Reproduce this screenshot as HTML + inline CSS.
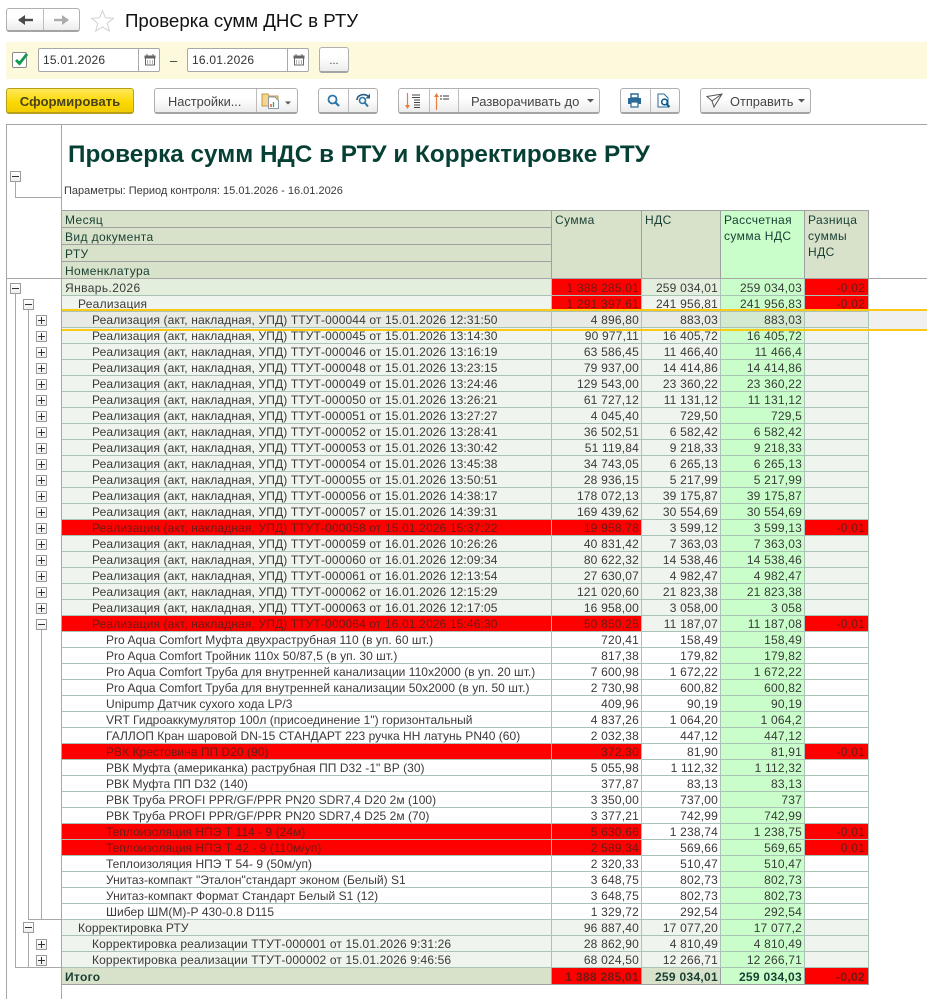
<!DOCTYPE html>
<html lang="ru"><head><meta charset="utf-8"><title>Проверка сумм ДНС в РТУ</title>
<style>
html,body{margin:0;padding:0;background:#fff;width:927px;height:999px;overflow:hidden}
body{font-family:"Liberation Sans",sans-serif;font-size:12px;color:#333;position:relative}
.a{position:absolute;box-sizing:border-box;white-space:nowrap}
.btn{position:absolute;box-sizing:border-box;border:1px solid #b0b0b0;border-bottom:2px solid #a4a4a4;border-radius:3px;background:linear-gradient(#fff,#fff 40%,#ececec);color:#444;line-height:22px;text-align:center;white-space:nowrap;font-size:12.8px}
.div{position:absolute;width:1px;background:#bcbcbc}
.inp{position:absolute;box-sizing:border-box;border:1px solid #a8a8a8;border-radius:2px;background:#fff;height:24px;width:122px;line-height:22px;padding-left:4px;color:#333;letter-spacing:.22px}
.inp i{position:absolute;left:99px;top:0;width:1px;height:22px;background:#a8a8a8}
.inp svg{position:absolute;left:105px;top:5px}
.h{position:absolute;box-sizing:border-box;background:#d8e2ca;border:1px solid #a0a0a0;border-left:0;color:#173f33;line-height:16px;padding:1px 3px;letter-spacing:.4px}
.hl{position:absolute;left:62px;width:490px;height:17px;box-sizing:border-box;background:#d8e2ca;border-bottom:1px solid #a0a0a0;color:#173f33;line-height:18px;padding-left:3px;letter-spacing:.38px}
.hz{position:absolute;background:#a8a8a8;height:1px}
.vt{position:absolute;background:#a8a8a8;width:1px}
.gl{position:absolute;background:#a6a6a6}
.bx{position:absolute;box-sizing:border-box;width:11px;height:11px;border:1px solid #9a9a9a;background:linear-gradient(#fff,#eee)}
.bx:before{content:"";position:absolute;left:1px;top:4px;width:7px;height:1px;background:#333}
.p:after{content:"";position:absolute;left:4px;top:1px;width:1px;height:7px;background:#333}
table{position:absolute;left:62px;top:279px;border-collapse:separate;border-spacing:0;table-layout:fixed;width:807px}
td{box-sizing:border-box;height:16px;padding:2px 2px 0 0;border-right:1px solid #a9c4b7;border-bottom:1px solid #a9c4b7;line-height:13px;text-align:right;white-space:nowrap;overflow:hidden;color:#3a3a3a;background:#f0f4ee;letter-spacing:.2px}
td:first-child{text-align:left;background:inherit;letter-spacing:.13px}
td:nth-child(4){background:#c9fdc9}
td:nth-child(5){padding-right:3px}
tr{background:#f0f4ee}
tr.w td{background:#fff}
tr.w td:nth-child(4){background:#c9fdc9}
tr td:first-child{padding-left:30px}
tr.w td:first-child{padding-left:44px;letter-spacing:.03px}
tr.l0 td:first-child{padding-left:3px;letter-spacing:.4px}
tr.l1 td:first-child{padding-left:16px;letter-spacing:.25px}
tr.l0 td{background:#e3eedd;height:17px;line-height:14px}
tr.l0 td:nth-child(4){background:#c9fdc9}
tr.r td:first-child,td.x,tr.w td.x,tr.l0 td.x,tr.t td.x{background:#f00;color:#6d1a14}
tr.s td{background:#e8eae5}
tr.s td:nth-child(4){background:#d3e9d0}
tr.t td{background:#d8e2ca;height:17px;line-height:14px;font-weight:bold;color:#173f33;border-bottom:1px solid #a0a0a0;border-right-color:#a0a0a0;letter-spacing:.3px}
tr.t td:nth-child(4){background:#c9fdc9}
tr.t td:first-child{padding-left:3px}
</style></head><body>

<!-- Nav -->
<div class="btn" style="left:6px;top:8px;width:74px;height:24px"></div>
<div class="div" style="left:43px;top:9px;height:21px"></div>
<svg class="a" style="left:17px;top:13px" width="60" height="14"><path d="M2 7H16" stroke="#4a4a4a" stroke-width="2.4"/><path d="M1 7L8 2V12Z" fill="#4a4a4a"/><path d="M37 7H51" stroke="#acacac" stroke-width="2.4"/><path d="M52 7L45 2V12Z" fill="#acacac"/></svg>
<svg class="a" style="left:91px;top:9px" width="24" height="24"><path d="M11.5 1.5L14.4 8.8 22.5 9.3 16.2 14.4 18.3 22 11.5 17.9 4.7 22 6.8 14.4 .5 9.3 8.6 8.8Z" fill="#fff" stroke="#d0d0d0" stroke-width="1"/></svg>
<div class="a" style="left:125px;top:10px;font-size:18.7px;line-height:22px;color:#111">Проверка сумм ДНС в РТУ</div>

<!-- Filter band -->
<div class="a" style="left:6px;top:42px;width:921px;height:37px;background:#fdf9dc"></div>
<div class="a" style="left:12px;top:52px;width:15px;height:16px;border:1px solid #8a8a8a;border-radius:2px;background:#fff"></div>
<svg class="a" style="left:13px;top:51px" width="16" height="16"><path d="M3 9L6.500 12.500 14 3" fill="none" stroke="#0e9a50" stroke-width="2.8"/></svg>
<div class="inp" style="left:38px;top:48px">15.01.2026<i></i><svg width="12" height="12"><path d="M1.5 2H10.5V11H1.5Z" fill="#fff" stroke="#666"/><path d="M1 2H11V4H1ZM3 0V2M9 0V2" fill="#666" stroke="#666"/><path d="M3 7H4M5.5 7H6.5M8 7H9M3 9H4M5.5 9H6.5M8 9H9" stroke="#666"/></svg></div>
<div class="a" style="left:170px;top:53px;line-height:15px;color:#333;font-size:13px">–</div>
<div class="inp" style="left:187px;top:48px">16.01.2026<i></i><svg width="12" height="12"><path d="M1.5 2H10.5V11H1.5Z" fill="#fff" stroke="#666"/><path d="M1 2H11V4H1ZM3 0V2M9 0V2" fill="#666" stroke="#666"/><path d="M3 7H4M5.5 7H6.5M8 7H9M3 9H4M5.5 9H6.5M8 9H9" stroke="#666"/></svg></div>
<div class="btn" style="left:319px;top:47px;width:30px;height:26px;line-height:26px;font-size:11px">...</div>

<!-- Toolbar -->
<div class="btn" style="left:6px;top:88px;width:128px;height:26px;line-height:25px;background:linear-gradient(#ffe95a,#fbd800 60%,#f2cc00);border-color:#b79f1a;font-weight:bold;font-size:13.2px;color:#4a431a">Сформировать</div>
<div class="btn" style="left:154px;top:88px;width:144px;height:26px;line-height:25px;text-align:left;padding-left:13px">Настройки...</div>
<div class="div" style="left:256px;top:89px;height:23px"></div>
<svg class="a" style="left:261px;top:92px" width="32" height="18"><path d="M1 2H7L8 4H17V14H1Z" fill="#f5d48c" stroke="#c09a50"/><path d="M7.500 5H14L17.500 8.500V16.500H7.500Z" fill="#fff" stroke="#8a9aa6"/><path d="M10 15V12" stroke="#d04030" stroke-width="1.300"/><path d="M12.500 15V10" stroke="#40a060" stroke-width="1.300"/><path d="M24 9.500H30L27 12.500Z" fill="#555"/></svg>

<div class="btn" style="left:318px;top:88px;width:60px;height:26px"></div>
<div class="div" style="left:348px;top:89px;height:23px"></div>
<svg class="a" style="left:326px;top:93px" width="46" height="16"><circle cx="6.500" cy="6.500" r="4" fill="none" stroke="#2a76a8" stroke-width="1.800"/><path d="M9.500 9.500L13 13" stroke="#2a76a8" stroke-width="2.200"/><circle cx="36.500" cy="7.500" r="3" fill="none" stroke="#2a76a8" stroke-width="1.600"/><path d="M39 10L42 13.500" stroke="#2a76a8" stroke-width="2"/><path d="M31 7C31 2 38 0 42 3" fill="none" stroke="#2a5f88" stroke-width="1.600"/><path d="M44 0.500V5.500H39.500Z" fill="#2a5f88"/></svg>

<div class="btn" style="left:398px;top:88px;width:202px;height:26px;line-height:25px;text-align:left;padding-left:72px;font-size:13px">Разворачивать до</div>
<div class="div" style="left:429px;top:89px;height:23px"></div>
<div class="div" style="left:458px;top:89px;height:23px"></div>
<svg class="a" style="left:404px;top:92px" width="50" height="18"><path d="M3.500 1V15" stroke="#ee7a3c" stroke-width="1.200"/><path d="M1 13H6L3.500 17Z" fill="#ee7a3c"/><path d="M8 3H16M8 5.500H16M10 8H16M10 10.500H16M10 13H16M10 15.500H16" stroke="#444" stroke-width=".9"/><path d="M32.500 3V18" stroke="#ee7a3c" stroke-width="1.200"/><path d="M30 5H35L32.500 1Z" fill="#ee7a3c"/><path d="M36 4H38M39 4H45M36 7H38M39 7H45" stroke="#333"/></svg>
<svg class="a" style="left:587px;top:99px" width="8" height="5"><path d="M0 0H7L3.500 3.500Z" fill="#555"/></svg>

<div class="btn" style="left:620px;top:88px;width:60px;height:26px"></div>
<div class="div" style="left:650px;top:89px;height:23px"></div>
<svg class="a" style="left:627px;top:93px" width="48" height="16"><path d="M4 1H11V5H4Z" fill="none" stroke="#2b6a96" stroke-width="1.400"/><path d="M1 5H14V11H1Z" fill="#2b6a96"/><path d="M4 9H11V14H4Z" fill="#fff" stroke="#2b6a96" stroke-width="1.200"/><path d="M31 1H37L41 5V14H31Z" fill="#fff" stroke="#2b6a96"/><circle cx="37.500" cy="9" r="2.800" fill="#fff" stroke="#0f5a8a" stroke-width="1.600"/><path d="M39.500 11L42.500 14" stroke="#0f5a8a" stroke-width="2"/></svg>

<div class="btn" style="left:700px;top:88px;width:111px;height:26px;line-height:25px;text-align:left;padding-left:29px">Отправить</div>
<svg class="a" style="left:706px;top:93px" width="18" height="16"><path d="M1 3.500L16 1 8 14 6 8ZM6 8L16 1" fill="none" stroke="#555" stroke-width="1"/></svg>
<svg class="a" style="left:798px;top:99px" width="8" height="5"><path d="M0 0H7L3.500 3.500Z" fill="#555"/></svg>

<!-- Report frame -->
<div class="gl" style="left:6px;top:124px;width:921px;height:1px"></div>
<div class="gl" style="left:6px;top:124px;width:1px;height:875px"></div>
<div class="gl" style="left:61px;top:124px;width:1px;height:875px"></div>

<div class="a" style="left:68px;top:140px;font-size:24.3px;line-height:30px;font-weight:bold;color:#063f33">Проверка сумм НДС в РТУ и Корректировке РТУ</div>
<div class="a" style="left:64px;top:185px;font-size:11px;line-height:12px;color:#3a3a3a">Параметры: Период контроля: 15.01.2026 - 16.01.2026</div>

<!-- Column header -->
<div class="hz" style="left:62px;top:210px;width:807px;background:#a0a0a0"></div>
<div class="hl" style="top:211px">Месяц</div>
<div class="hl" style="top:228px">Вид документа</div>
<div class="hl" style="top:245px">РТУ</div>
<div class="hl" style="top:262px">Номенклатура</div>
<div class="a" style="left:551px;top:210px;width:1px;height:69px;background:#a0a0a0"></div>
<div class="h" style="left:552px;top:210px;width:90px;height:69px">Сумма</div>
<div class="h" style="left:642px;top:210px;width:79px;height:69px">НДС</div>
<div class="h" style="left:721px;top:210px;width:84px;height:69px;background:#c9fdc9">Рассчетная сумма НДС</div>
<div class="h" style="left:805px;top:210px;width:64px;height:69px">Разница суммы НДС</div>
<div class="gl" style="left:6px;top:278px;width:921px;height:1px"></div>

<!-- Data -->
<table>
<colgroup><col style="width:490px"><col style="width:90px"><col style="width:79px"><col style="width:84px"><col style="width:64px"></colgroup>
<tr class="l0"><td>Январь.2026</td><td class="x">1 388 285,01</td><td>259 034,01</td><td>259 034,03</td><td class="x">-0,02</td></tr>
<tr class="l1"><td>Реализация</td><td class="x">1 291 397,61</td><td>241 956,81</td><td>241 956,83</td><td class="x">-0,02</td></tr>
<tr class="s"><td>Реализация (акт, накладная, УПД) ТТУТ-000044 от 15.01.2026 12:31:50</td><td>4 896,80</td><td>883,03</td><td>883,03</td><td></td></tr>
<tr><td>Реализация (акт, накладная, УПД) ТТУТ-000045 от 15.01.2026 13:14:30</td><td>90 977,11</td><td>16 405,72</td><td>16 405,72</td><td></td></tr>
<tr><td>Реализация (акт, накладная, УПД) ТТУТ-000046 от 15.01.2026 13:16:19</td><td>63 586,45</td><td>11 466,40</td><td>11 466,4</td><td></td></tr>
<tr><td>Реализация (акт, накладная, УПД) ТТУТ-000048 от 15.01.2026 13:23:15</td><td>79 937,00</td><td>14 414,86</td><td>14 414,86</td><td></td></tr>
<tr><td>Реализация (акт, накладная, УПД) ТТУТ-000049 от 15.01.2026 13:24:46</td><td>129 543,00</td><td>23 360,22</td><td>23 360,22</td><td></td></tr>
<tr><td>Реализация (акт, накладная, УПД) ТТУТ-000050 от 15.01.2026 13:26:21</td><td>61 727,12</td><td>11 131,12</td><td>11 131,12</td><td></td></tr>
<tr><td>Реализация (акт, накладная, УПД) ТТУТ-000051 от 15.01.2026 13:27:27</td><td>4 045,40</td><td>729,50</td><td>729,5</td><td></td></tr>
<tr><td>Реализация (акт, накладная, УПД) ТТУТ-000052 от 15.01.2026 13:28:41</td><td>36 502,51</td><td>6 582,42</td><td>6 582,42</td><td></td></tr>
<tr><td>Реализация (акт, накладная, УПД) ТТУТ-000053 от 15.01.2026 13:30:42</td><td>51 119,84</td><td>9 218,33</td><td>9 218,33</td><td></td></tr>
<tr><td>Реализация (акт, накладная, УПД) ТТУТ-000054 от 15.01.2026 13:45:38</td><td>34 743,05</td><td>6 265,13</td><td>6 265,13</td><td></td></tr>
<tr><td>Реализация (акт, накладная, УПД) ТТУТ-000055 от 15.01.2026 13:50:51</td><td>28 936,15</td><td>5 217,99</td><td>5 217,99</td><td></td></tr>
<tr><td>Реализация (акт, накладная, УПД) ТТУТ-000056 от 15.01.2026 14:38:17</td><td>178 072,13</td><td>39 175,87</td><td>39 175,87</td><td></td></tr>
<tr><td>Реализация (акт, накладная, УПД) ТТУТ-000057 от 15.01.2026 14:39:31</td><td>169 439,62</td><td>30 554,69</td><td>30 554,69</td><td></td></tr>
<tr class="r"><td>Реализация (акт, накладная, УПД) ТТУТ-000058 от 15.01.2026 15:37:22</td><td class="x">19 958,78</td><td>3 599,12</td><td>3 599,13</td><td class="x">-0,01</td></tr>
<tr><td>Реализация (акт, накладная, УПД) ТТУТ-000059 от 16.01.2026 10:26:26</td><td>40 831,42</td><td>7 363,03</td><td>7 363,03</td><td></td></tr>
<tr><td>Реализация (акт, накладная, УПД) ТТУТ-000060 от 16.01.2026 12:09:34</td><td>80 622,32</td><td>14 538,46</td><td>14 538,46</td><td></td></tr>
<tr><td>Реализация (акт, накладная, УПД) ТТУТ-000061 от 16.01.2026 12:13:54</td><td>27 630,07</td><td>4 982,47</td><td>4 982,47</td><td></td></tr>
<tr><td>Реализация (акт, накладная, УПД) ТТУТ-000062 от 16.01.2026 12:15:29</td><td>121 020,60</td><td>21 823,38</td><td>21 823,38</td><td></td></tr>
<tr><td>Реализация (акт, накладная, УПД) ТТУТ-000063 от 16.01.2026 12:17:05</td><td>16 958,00</td><td>3 058,00</td><td>3 058</td><td></td></tr>
<tr class="r"><td>Реализация (акт, накладная, УПД) ТТУТ-000064 от 16.01.2026 15:46:30</td><td class="x">50 850,25</td><td>11 187,07</td><td>11 187,08</td><td class="x">-0,01</td></tr>
<tr class="w"><td>Pro Aqua Comfort Муфта двухраструбная 110 (в уп. 60 шт.)</td><td>720,41</td><td>158,49</td><td>158,49</td><td></td></tr>
<tr class="w"><td>Pro Aqua Comfort Тройник 110х 50/87,5 (в уп. 30 шт.)</td><td>817,38</td><td>179,82</td><td>179,82</td><td></td></tr>
<tr class="w"><td>Pro Aqua Comfort Труба для внутренней канализации 110х2000 (в уп. 20 шт.)</td><td>7 600,98</td><td>1 672,22</td><td>1 672,22</td><td></td></tr>
<tr class="w"><td>Pro Aqua Comfort Труба для внутренней канализации 50х2000 (в уп. 50 шт.)</td><td>2 730,98</td><td>600,82</td><td>600,82</td><td></td></tr>
<tr class="w"><td>Unipump Датчик сухого хода LP/3</td><td>409,96</td><td>90,19</td><td>90,19</td><td></td></tr>
<tr class="w"><td>VRT Гидроаккумулятор 100л (присоединение 1") горизонтальный</td><td>4 837,26</td><td>1 064,20</td><td>1 064,2</td><td></td></tr>
<tr class="w"><td>ГАЛЛОП Кран шаровой DN-15 СТАНДАРТ 223 ручка НН латунь PN40 (60)</td><td>2 032,38</td><td>447,12</td><td>447,12</td><td></td></tr>
<tr class="w r"><td>РВК Крестовина ПП D20 (90)</td><td class="x">372,30</td><td>81,90</td><td>81,91</td><td class="x">-0,01</td></tr>
<tr class="w"><td>РВК Муфта (американка) раструбная ПП D32 -1" ВР (30)</td><td>5 055,98</td><td>1 112,32</td><td>1 112,32</td><td></td></tr>
<tr class="w"><td>РВК Муфта ПП D32 (140)</td><td>377,87</td><td>83,13</td><td>83,13</td><td></td></tr>
<tr class="w"><td>РВК Труба PROFI PPR/GF/PPR PN20 SDR7,4 D20 2м (100)</td><td>3 350,00</td><td>737,00</td><td>737</td><td></td></tr>
<tr class="w"><td>РВК Труба PROFI PPR/GF/PPR PN20 SDR7,4 D25 2м (70)</td><td>3 377,21</td><td>742,99</td><td>742,99</td><td></td></tr>
<tr class="w r"><td>Теплоизоляция НПЭ Т 114 - 9 (24м)</td><td class="x">5 630,66</td><td>1 238,74</td><td>1 238,75</td><td class="x">-0,01</td></tr>
<tr class="w r"><td>Теплоизоляция НПЭ Т 42 - 9 (110м/уп)</td><td class="x">2 589,34</td><td>569,66</td><td>569,65</td><td class="x">0,01</td></tr>
<tr class="w"><td>Теплоизоляция НПЭ Т 54- 9 (50м/уп)</td><td>2 320,33</td><td>510,47</td><td>510,47</td><td></td></tr>
<tr class="w"><td>Унитаз-компакт "Эталон"стандарт  эконом (Белый) S1</td><td>3 648,75</td><td>802,73</td><td>802,73</td><td></td></tr>
<tr class="w"><td>Унитаз-компакт Формат Стандарт Белый S1 (12)</td><td>3 648,75</td><td>802,73</td><td>802,73</td><td></td></tr>
<tr class="w"><td>Шибер ШМ(М)-Р 430-0.8 D115</td><td>1 329,72</td><td>292,54</td><td>292,54</td><td></td></tr>
<tr class="l1"><td style="letter-spacing:.1px">Корректировка РТУ</td><td>96 887,40</td><td>17 077,20</td><td>17 077,2</td><td></td></tr>
<tr><td>Корректировка реализации ТТУТ-000001 от 15.01.2026 9:31:26</td><td>28 862,90</td><td>4 810,49</td><td>4 810,49</td><td></td></tr>
<tr><td>Корректировка реализации ТТУТ-000002 от 15.01.2026 9:46:56</td><td>68 024,50</td><td>12 266,71</td><td>12 266,71</td><td></td></tr>
<tr class="t"><td>Итого</td><td class="x">1 388 285,01</td><td>259 034,01</td><td>259 034,03</td><td class="x">-0,02</td></tr>
</table>

<!-- Selected row tail and yellow lines -->
<div class="a" style="left:869px;top:311px;width:58px;height:18px;background:#f0f0f0"></div>
<div class="a" style="left:62px;top:309px;width:865px;height:2px;background:#fcc917"></div>
<div class="a" style="left:62px;top:329px;width:865px;height:2px;background:#fcc917"></div>

<!-- Tree -->
<div class="vt" style="left:15px;top:181px;height:16px"></div>
<div class="hz" style="left:15px;top:197px;width:46px"></div>
<div class="bx" style="left:10px;top:171px"></div>
<div class="vt" style="left:15px;top:293px;height:675px"></div>
<div class="hz" style="left:15px;top:967px;width:46px"></div>
<div class="bx" style="left:10px;top:283px"></div>
<div class="vt" style="left:28px;top:309px;height:610px"></div>
<div class="hz" style="left:28px;top:919px;width:33px"></div>
<div class="bx" style="left:23px;top:299px"></div>
<div class="vt" style="left:28px;top:932px;height:36px"></div>
<div class="bx" style="left:23px;top:922px"></div>
<div class="vt" style="left:41px;top:627px;height:292px"></div>
<div class="bx p" style="left:36px;top:315px"></div>
<div class="bx p" style="left:36px;top:331px"></div>
<div class="bx p" style="left:36px;top:347px"></div>
<div class="bx p" style="left:36px;top:363px"></div>
<div class="bx p" style="left:36px;top:379px"></div>
<div class="bx p" style="left:36px;top:395px"></div>
<div class="bx p" style="left:36px;top:411px"></div>
<div class="bx p" style="left:36px;top:427px"></div>
<div class="bx p" style="left:36px;top:443px"></div>
<div class="bx p" style="left:36px;top:459px"></div>
<div class="bx p" style="left:36px;top:475px"></div>
<div class="bx p" style="left:36px;top:491px"></div>
<div class="bx p" style="left:36px;top:507px"></div>
<div class="bx p" style="left:36px;top:523px"></div>
<div class="bx p" style="left:36px;top:539px"></div>
<div class="bx p" style="left:36px;top:555px"></div>
<div class="bx p" style="left:36px;top:571px"></div>
<div class="bx p" style="left:36px;top:587px"></div>
<div class="bx p" style="left:36px;top:603px"></div>
<div class="bx" style="left:36px;top:619px"></div>
<div class="bx p" style="left:36px;top:939px"></div>
<div class="bx p" style="left:36px;top:955px"></div>
</body></html>
